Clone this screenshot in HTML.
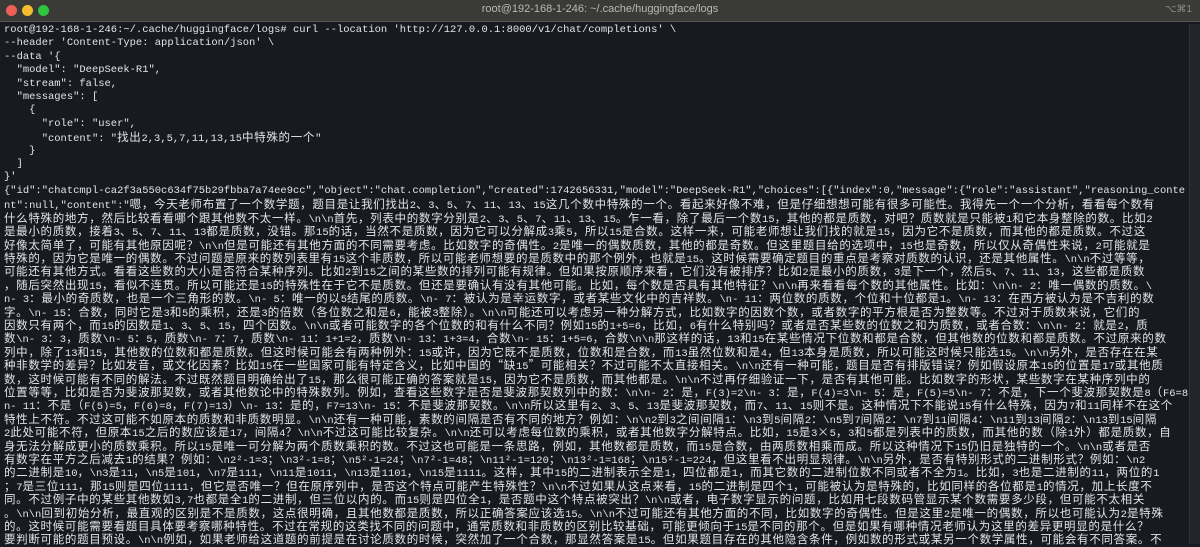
<!DOCTYPE html>
<html><head><meta charset="utf-8"><style>
html,body{margin:0;padding:0;width:1200px;height:544px;overflow:hidden;background:#171b21}
.tb{position:absolute;left:0;top:0;width:1200px;height:21px;background:#3a3a37;border-bottom:1px solid #55554f}
.dot{position:absolute;top:5px;width:11px;height:11px;border-radius:50%}
.tt{position:absolute;top:3px;left:0;width:1200px;text-align:center;color:#b9b9b4;font:11px "Liberation Sans",sans-serif}
.kb{position:absolute;top:4px;right:8px;color:#8d8d88;font:10px "Liberation Sans",sans-serif}
.term{position:absolute;left:4px;top:24px;width:1184px;font-family:"Liberation Mono","Noto Sans CJK SC",monospace;font-size:10.47px;line-height:13.42px;color:#e2e4e6}
.term div{white-space:pre;overflow:hidden;height:13.42px}
.c{font-family:"Noto Sans CJK SC",sans-serif;font-size:11.5px;letter-spacing:0.68px}
.sb{position:absolute;right:0;top:24px;width:10px;height:520px;background:#22262c;border-left:1px solid #2d3138}
</style></head><body>
<div class="tb">
<div class="dot" style="left:6px;background:#ee5f57"></div>
<div class="dot" style="left:22px;background:#f4bc2f"></div>
<div class="dot" style="left:38px;background:#2fc441"></div>
<div class="tt">root@192-168-1-246: ~/.cache/huggingface/logs</div>
<div class="kb">⌥⌘1</div>
</div>
<div class="sb"></div>
<div class="term" id="t">
<div>root@192-168-1-246:~/.cache/huggingface/logs# curl --location 'http://127.0.0.1:8000/v1/chat/completions' \</div>
<div>--header 'Content-Type: application/json' \</div>
<div>--data '{</div>
<div>  "model": "DeepSeek-R1",</div>
<div>  "stream": false,</div>
<div>  "messages": [</div>
<div>    {</div>
<div>      "role": "user",</div>
<div>      "content": "找出2,3,5,7,11,13,15中特殊的一个"</div>
<div>    }</div>
<div>  ]</div>
<div>}'</div>
<div>{"id":"chatcmpl-ca2f3a550c634f75b29fbba7a74ee9cc","object":"chat.completion","created":1742656331,"model":"DeepSeek-R1","choices":[{"index":0,"message":{"role":"assistant","reasoning_conte</div>
<div>nt":null,"content":"嗯，今天老师布置了一个数学题，题目是让我们找出2、3、5、7、11、13、15这几个数中特殊的一个。看起来好像不难，但是仔细想想可能有很多可能性。我得先一个一个分析，看看每个数有</div>
<div>什么特殊的地方，然后比较看看哪个跟其他数不太一样。\n\n首先，列表中的数字分别是2、3、5、7、11、13、15。乍一看，除了最后一个数15，其他的都是质数，对吧？质数就是只能被1和它本身整除的数。比如2</div>
<div>是最小的质数，接着3、5、7、11、13都是质数，没错。那15的话，当然不是质数，因为它可以分解成3乘5，所以15是合数。这样一来，可能老师想让我们找的就是15，因为它不是质数，而其他的都是质数。不过这</div>
<div>好像太简单了，可能有其他原因呢？\n\n但是可能还有其他方面的不同需要考虑。比如数字的奇偶性。2是唯一的偶数质数，其他的都是奇数。但这里题目给的选项中，15也是奇数，所以仅从奇偶性来说，2可能就是</div>
<div>特殊的，因为它是唯一的偶数。不过问题是原来的数列表里有15这个非质数，所以可能老师想要的是质数中的那个例外，也就是15。这时候需要确定题目的重点是考察对质数的认识，还是其他属性。\n\n不过等等，</div>
<div>可能还有其他方式。看看这些数的大小是否符合某种序列。比如2到15之间的某些数的排列可能有规律。但如果按原顺序来看，它们没有被排序？比如2是最小的质数，3是下一个，然后5、7、11、13，这些都是质数</div>
<div>，随后突然出现15，看似不连贯。所以可能还是15的特殊性在于它不是质数。但还是要确认有没有其他可能。比如，每个数是否具有其他特征？\n\n再来看看每个数的其他属性。比如：\n\n- 2：唯一偶数的质数。\</div>
<div>n- 3：最小的奇质数，也是一个三角形的数。\n- 5：唯一的以5结尾的质数。\n- 7：被认为是幸运数字，或者某些文化中的吉祥数。\n- 11：两位数的质数，个位和十位都是1。\n- 13：在西方被认为是不吉利的数</div>
<div>字。\n- 15：合数，同时它是3和5的乘积，还是3的倍数（各位数之和是6，能被3整除）。\n\n可能还可以考虑另一种分解方式，比如数字的因数个数，或者数字的平方根是否为整数等。不过对于质数来说，它们的</div>
<div>因数只有两个，而15的因数是1、3、5、15，四个因数。\n\n或者可能数字的各个位数的和有什么不同？例如15的1+5=6，比如，6有什么特别吗？或者是否某些数的位数之和为质数，或者合数：\n\n- 2：就是2，质</div>
<div>数\n- 3：3，质数\n- 5：5，质数\n- 7：7，质数\n- 11：1+1=2，质数\n- 13：1+3=4，合数\n- 15：1+5=6，合数\n\n那这样的话，13和15在某些情况下位数和都是合数，但其他数的位数和都是质数。不过原来的数</div>
<div>列中，除了13和15，其他数的位数和都是质数。但这时候可能会有两种例外：15或许，因为它既不是质数，位数和是合数，而13虽然位数和是4，但13本身是质数，所以可能这时候只能选15。\n\n另外，是否存在在某</div>
<div>种非数学的差异？比如发音，或文化因素？比如15在一些国家可能有特定含义，比如中国的“缺15”可能相关？不过可能不太直接相关。\n\n还有一种可能，题目是否有排版错误？例如假设原本15的位置是17或其他质</div>
<div>数，这时候可能有不同的解法。不过既然题目明确给出了15，那么很可能正确的答案就是15，因为它不是质数，而其他都是。\n\n不过再仔细验证一下，是否有其他可能。比如数字的形状，某些数字在某种序列中的</div>
<div>位置等等，比如是否为斐波那契数，或者其他数论中的特殊数列。例如，查看这些数字是否是斐波那契数列中的数：\n\n- 2：是，F(3)=2\n- 3：是，F(4)=3\n- 5：是，F(5)=5\n- 7：不是，下一个斐波那契数是8（F6=8）\</div>
<div>n- 11：不是（F(5)=5，F(6)=8，F(7)=13）\n- 13：是的，F7=13\n- 15：不是斐波那契数。\n\n所以这里有2、3、5、13是斐波那契数，而7、11、15则不是。这种情况下不能说15有什么特殊，因为7和11同样不在这个</div>
<div>特性上不符。不过这可能不如原本的质数和非质数明显。\n\n还有一种可能，素数的间隔是否有不同的地方？例如：\n\n2到3之间间隔1：\n3到5间隔2：\n5到7间隔2：\n7到11间隔4：\n11到13间隔2：\n13到15间隔</div>
<div>2此处可能不符，但原本15之后的数应该是17，间隔4？\n\n不过这可能比较复杂。\n\n还可以考虑每位数的乘积，或者其他数字分解特点。比如，15是3×5，3和5都是列表中的质数，而其他的数（除1外）都是质数，自</div>
<div>身无法分解成更小的质数乘积。所以15是唯一可分解为两个质数乘积的数。不过这也可能是一条思路，例如，其他数都是质数，而15是合数，由两质数相乘而成。所以这种情况下15仍旧是独特的一个。\n\n或者是否</div>
<div>有数字在平方之后减去1的结果？例如：\n2²-1=3；\n3²-1=8；\n5²-1=24；\n7²-1=48；\n11²-1=120；\n13²-1=168；\n15²-1=224，但这里看不出明显规律。\n\n另外，是否有特别形式的二进制形式？例如：\n2</div>
<div>的二进制是10，\n3是11，\n5是101，\n7是111，\n11是1011，\n13是1101，\n15是1111。这样，其中15的二进制表示全是1，四位都是1，而其它数的二进制位数不同或者不全为1。比如，3也是二进制的11，两位的1</div>
<div>；7是三位111，那15则是四位1111，但它是否唯一？但在原序列中，是否这个特点可能产生特殊性？\n\n不过如果从这点来看，15的二进制是四个1，可能被认为是特殊的，比如同样的各位都是1的情况，加上长度不</div>
<div>同。不过例子中的某些其他数如3,7也都是全1的二进制，但三位以内的。而15则是四位全1，是否题中这个特点被突出？\n\n或者，电子数字显示的问题，比如用七段数码管显示某个数需要多少段，但可能不太相关</div>
<div>。\n\n回到初始分析，最直观的区别是不是质数，这点很明确，且其他数都是质数，所以正确答案应该选15。\n\n不过可能还有其他方面的不同，比如数字的奇偶性。但是这里2是唯一的偶数，所以也可能认为2是特殊</div>
<div>的。这时候可能需要看题目具体要考察哪种特性。不过在常规的这类找不同的问题中，通常质数和非质数的区别比较基础，可能更倾向于15是不同的那个。但是如果有哪种情况老师认为这里的差异更明显的是什么？</div>
<div>要判断可能的题目预设。\n\n例如，如果老师给这道题的前提是在讨论质数的时候，突然加了一个合数，那显然答案是15。但如果题目存在的其他隐含条件，例如数的形式或某另一个数学属性，可能会有不同答案。不</div>
</div>
<script>
document.querySelectorAll('#t div').forEach(function(d){
  d.innerHTML=d.textContent.replace(/&/g,'&amp;').replace(/</g,'&lt;').replace(/([\u2E80-\u9FFF\uFF00-\uFFEF\u3000-\u303F\u201C\u201D\u00D7]+)/g,'<span class="c">$1</span>');
});
</script>
</body></html>
